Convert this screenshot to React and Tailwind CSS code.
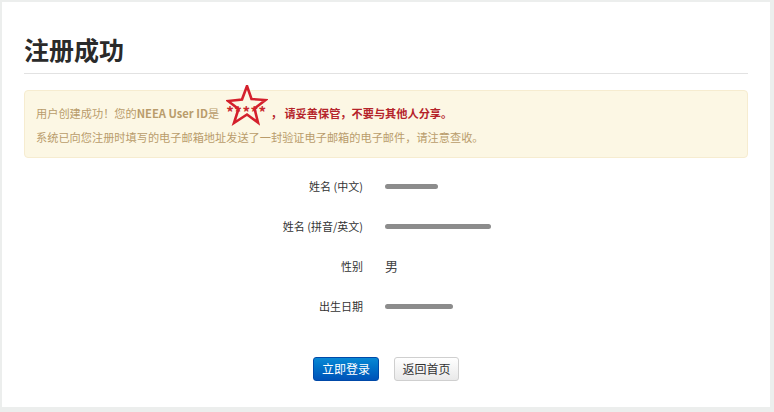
import React from "react";

const font = { fontFamily: '"Noto Sans CJK SC", "Liberation Sans", sans-serif' };

// star drawn over the hidden ID
const Star = () => (
  <svg
    className="absolute left-[0px] top-[-15px] pointer-events-none"
    width="42"
    height="42"
    viewBox="0 0 42 42"
  >
    <polygon
      points="21,1 25.5,14 39.5,15 28.5,23.5 32,37.5 21,29.5 8,38 12.5,24 2,16 16,14.5"
      fill="none"
      stroke="#d4202c"
      strokeWidth="2.6"
      strokeLinejoin="miter"
    />
  </svg>
);

const Redacted = ({ w }) => (
  <div className="flex items-center h-full">
    <div className={`h-[5px] rounded-full bg-[#8c8c8c] blur-[0.6px] ${w}`} />
  </div>
);

const Row = ({ label, children }) => (
  <div className="flex h-[40px] items-center">
    <div className="w-[339px] text-right text-[11px] text-[#333]">{label}</div>
    <div className="ml-[22px] h-full flex items-center">{children}</div>
  </div>
);

export default function App() {
  return (
    <div className="h-[412px] w-[774px] bg-[#eceeed] pt-[2px] pl-[2px] pr-[4px] pb-[5px]" style={font}>
      <div className="h-full bg-white px-[22px] pt-[29px]">
        <h1 className="text-[25px] leading-[36px] font-bold text-[#2a2a2a] pb-[6px] border-b border-[#e2e2e2]">
          注册成功
        </h1>

        <div className="mt-[16px] h-[68px] rounded-[4px] border border-[#f6ecd0] bg-[#fcf7e4] px-[11px] pt-[9px] text-[11.2px] leading-[24px] text-[#b99c6b]">
          <div className="flex items-baseline">
            <span>用户创建成功！您的</span>
            <b>NEEA User ID</b>
            <span>是</span>
            <span className="relative ml-[7px] font-bold text-[15px] leading-[24px] text-[#c9282e] tracking-[0.5px]">
              *****
              <Star />
            </span>
            <span className="ml-[4px] font-bold text-[#b5232a]">，&nbsp;请妥善保管，不要与其他人分享。</span>
          </div>
          <div>系统已向您注册时填写的电子邮箱地址发送了一封验证电子邮箱的电子邮件，请注意查收。</div>
        </div>

        <div className="mt-[8px]">
          <Row label="姓名 (中文)">
            <Redacted w="w-[53px]" />
          </Row>
          <Row label="姓名 (拼音/英文)">
            <Redacted w="w-[106px]" />
          </Row>
          <Row label="性别">
            <span className="text-[13px] text-[#444]">男</span>
          </Row>
          <Row label="出生日期">
            <Redacted w="w-[68px]" />
          </Row>
        </div>

        <div className="mt-[31px] flex justify-center gap-[15px]">
          <button className="h-[24px] w-[66px] rounded-[3px] border border-[#0049a8] bg-gradient-to-b from-[#0a88d4] to-[#0052b8] text-[12px] text-white">
            立即登录
          </button>
          <button className="h-[24px] w-[65px] rounded-[3px] border border-[#cfcfcf] bg-gradient-to-b from-white to-[#e9e9e9] text-[12px] text-[#333]">
            返回首页
          </button>
        </div>
      </div>
    </div>
  );
}
